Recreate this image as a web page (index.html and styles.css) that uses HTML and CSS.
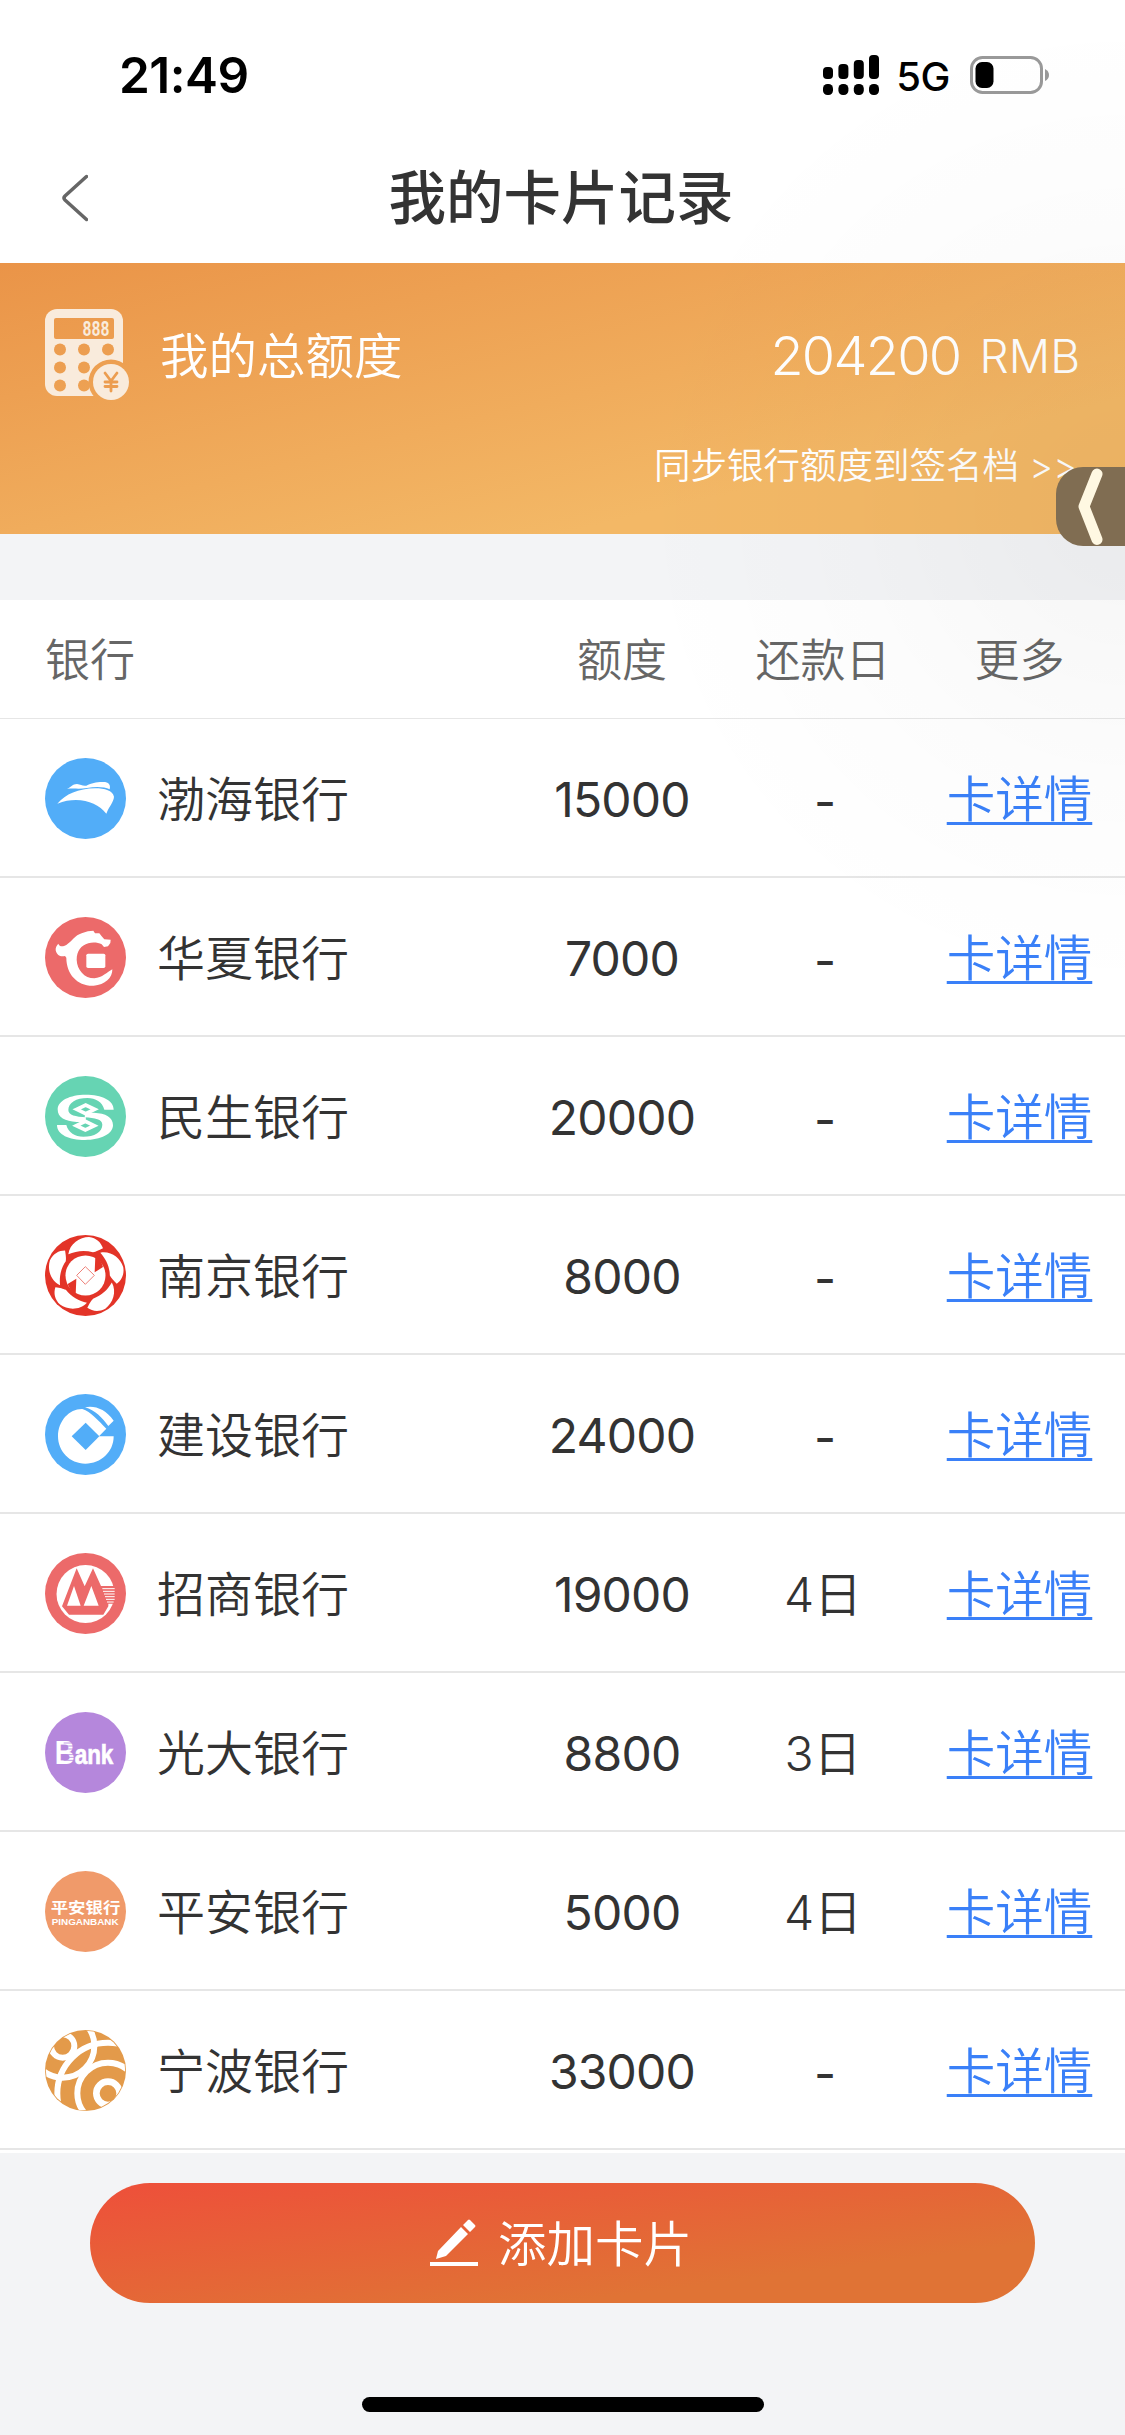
FILE: index.html
```html
<!DOCTYPE html>
<html lang="zh-CN">
<head>
  <meta charset="UTF-8" />
  <title>我的卡片记录</title>
  <link rel="stylesheet" href="styles.css">
</head>

<body>
  <!-- 状态栏 -->
  <div class="status-bar">
    <div class="time">21:49</div>
    <div class="status-icons">
      <svg class="signal" width="56" height="40" viewBox="0 0 56 40">
        <rect x="0" y="12" width="10" height="12" rx="4"/>
        <rect x="15.4" y="9" width="10" height="15" rx="4"/>
        <rect x="30.8" y="5" width="10" height="19" rx="4"/>
        <rect x="46" y="0" width="10" height="24" rx="4"/>
        <rect x="0" y="29" width="10" height="11" rx="4.5"/>
        <rect x="15.4" y="29" width="10" height="11" rx="4.5"/>
        <rect x="30.8" y="29" width="10" height="11" rx="4.5"/>
        <rect x="46" y="29" width="10" height="11" rx="4.5"/>
      </svg>
      <span class="network">5G</span>
      <svg class="battery" width="80" height="38" viewBox="0 0 80 38">
        <rect x="1.5" y="1.5" width="70" height="35" rx="11" fill="none" stroke="#999" stroke-width="3"/>
        <rect x="5.5" y="6" width="18" height="26" rx="6.5"/>
        <path d="M75 13 Q79 15 79 19 Q79 23 75 25 Z" fill="#999"/>
      </svg>
    </div>
  </div>

  <!-- 标题栏 -->
  <div class="nav-bar">
    <svg class="back" width="28" height="48" viewBox="0 0 28 48">
      <path d="M26.500 2.500 L5 22 Q3 24 5 26 L26.500 45.500" fill="none" stroke="#666" stroke-width="3.500" stroke-linecap="round"/>
    </svg>
    <h1>我的卡片记录</h1>
  </div>

  <!-- 总额度 -->
  <div class="total-card">
    <div class="total-row">
      <svg class="calc" width="84" height="92" viewBox="0 0 84 92">
        <mask id="calc-mask">
          <rect width="84" height="92" fill="#fff"/>
          <rect x="9" y="9" width="60" height="21" rx="2"/>
          <circle cx="15" cy="40.500" r="6"/><circle cx="39" cy="40.500" r="6"/><circle cx="63" cy="40.500" r="6"/>
          <circle cx="15" cy="58.500" r="6"/><circle cx="39" cy="58.500" r="6"/>
          <circle cx="15" cy="76.500" r="6"/><circle cx="39" cy="76.500" r="6"/>
          <circle cx="66" cy="73" r="22.500"/>
        </mask>
        <rect width="78" height="87" rx="12" fill="#f9ebdc" mask="url(#calc-mask)"/>
        <text class="calc-num" x="37.500" y="27" textLength="27" lengthAdjust="spacingAndGlyphs">888</text>
        <circle cx="66" cy="73" r="18" fill="#f9ebdc"/>
        <path d="M60 64 L66 72 L72 64 M66 72 V82 M60 73 H72 M60 77.500 H72" fill="none" stroke="#ec9d50" stroke-width="2.800" stroke-linecap="round"/>
      </svg>
      <span class="total-label">我的总额度</span>
      <span class="total-num">204200</span>
      <span class="total-unit">RMB</span>
    </div>
    <div class="sync">同步银行额度到签名档 &gt;&gt;</div>

    <!-- 侧边浮动按钮 -->
    <div class="float-tab">
      <svg width="69" height="79" viewBox="0 0 69 79">
        <path d="M41 7 L28 39.500 L41 72.500" fill="none" stroke="#fff8e2" stroke-width="11" stroke-linecap="round" stroke-linejoin="round"/>
      </svg>
    </div>
  </div>

  <!-- 卡片列表 -->
  <div class="card-list">
    <div class="row head">
      <span class="bank">银行</span>
      <span>额度</span>
      <span>还款日</span>
      <span>更多</span>
    </div>

    <div class="row">
      <div class="bank">
        <svg class="logo" viewBox="0 0 243 243">
          <circle cx="121.500" cy="121.500" r="121.500" fill="#52adf8"/>
          <path d="M37 137 C62 108 100 92 150 91 C180 91 203 98 207 116 C206 132 193 144 184 167 C156 132 100 113 37 137 Z" fill="#fff"/>
          <path d="M66 93 C80 86 82 79 96 78 C108 79 112 85 124 83 C140 76 152 72 172 72 C190 71 198 79 194 94 C178 86 152 85 126 90 C104 94 84 90 66 93 Z" fill="#fff"/>
        </svg>
        渤海银行
      </div>
      <span class="limit">15000</span>
      <span class="none">-</span>
      <a href="#">卡详情</a>
    </div>

    <div class="row">
      <div class="bank">
        <svg class="logo" viewBox="0 0 243 243">
          <circle cx="121.500" cy="121.500" r="121.500" fill="#ec6a6a"/>
          <path d="M32 100 C31 90 36 85 40 80 C44 90 53 90 64 84 C82 72 90 55 110 49 C122 43 136 41 145 41 L150 49 L163 49 L170 58 L178 67 L197 68 L196 78 L189 88 L177 90 L170 82 C160 77 144 75 130 79 C108 85 95 103 95 128 C96 158 118 184 148 184 C172 182 186 166 202 157 C203 182 180 204 146 206 C98 208 64 172 64 122 L60 117 C48 120 36 117 32 100 Z" fill="#fff"/>
          <rect x="124" y="110" width="57" height="43" rx="5" fill="#fff"/>
        </svg>
        华夏银行
      </div>
      <span class="limit">7000</span>
      <span class="none">-</span>
      <a href="#">卡详情</a>
    </div>

    <div class="row">
      <div class="bank">
        <svg class="logo" viewBox="0 0 243 243">
          <circle cx="121.500" cy="121.500" r="121.500" fill="#66d4b3"/>
          <g fill="#fff">
            <path d="M206 101 H178 C172 78 152 66 127 66 C94 66 70 80 70 102 C70 118 92 122 123 124 L121 138 H95 C60 136 38 125 38 100 C38 74 75 56 122 56 C170 56 206 72 206 101 Z"/>
            <path d="M206 101 H178 C172 78 152 66 127 66 C94 66 70 80 70 102 C70 118 92 122 123 124 L121 138 H95 C60 136 38 125 38 100 C38 74 75 56 122 56 C170 56 206 72 206 101 Z" transform="rotate(180 121 124)"/>
          </g>
          <g fill="#66d4b3" stroke="#fff" stroke-width="11">
            <path d="M95 100 L122 87 L149 100 L122 113 Z"/>
            <path d="M94 149 L121 136 L148 149 L121 162 Z"/>
          </g>
        </svg>
        民生银行
      </div>
      <span class="limit">20000</span>
      <span class="none">-</span>
      <a href="#">卡详情</a>
    </div>

    <div class="row">
      <div class="bank">
        <svg class="logo" viewBox="0 0 243 243">
          <circle cx="121.500" cy="121.500" r="121.500" fill="#e33428"/>
          <g fill="#fff">
            <path d="M70 58 C74 26 104 6 132 6 C154 9 168 22 174 40 C160 47 154 50 144 52 C118 44 92 48 70 58 Z"/>
            <path d="M70 58 C74 26 104 6 132 6 C154 9 168 22 174 40 C160 47 154 50 144 52 C118 44 92 48 70 58 Z" transform="rotate(72 121.500 121.500)"/>
            <path d="M70 58 C74 26 104 6 132 6 C154 9 168 22 174 40 C160 47 154 50 144 52 C118 44 92 48 70 58 Z" transform="rotate(144 121.500 121.500)"/>
            <path d="M70 58 C74 26 104 6 132 6 C154 9 168 22 174 40 C160 47 154 50 144 52 C118 44 92 48 70 58 Z" transform="rotate(216 121.500 121.500)"/>
            <path d="M70 58 C74 26 104 6 132 6 C154 9 168 22 174 40 C160 47 154 50 144 52 C118 44 92 48 70 58 Z" transform="rotate(288 121.500 121.500)"/>
            <circle cx="121.500" cy="121.500" r="60"/>
          </g>
          <path d="M151 64 L149 112 L174 96 C170 82 164 71 151 64 Z M92 179 L94 131 L68 147 C73 161 81 172 92 179 Z" fill="#e33428"/>
          <path d="M95 121 L121 95 L148 121 L121 148 Z" fill="#fff" stroke="#ee8078" stroke-width="3"/>
        </svg>
        南京银行
      </div>
      <span class="limit">8000</span>
      <span class="none">-</span>
      <a href="#">卡详情</a>
    </div>

    <div class="row">
      <div class="bank">
        <svg class="logo" viewBox="0 0 243 243">
          <circle cx="121.500" cy="121.500" r="121.500" fill="#52adf8"/>
          <path d="M162 127 H206 C206 174 168 209 121 209 C74 209 39 172 39 127 C39 80 74 44 112 45 C138 54 158 78 184 104 Z" fill="#fff"/>
          <path d="M120 40 C150 34 182 46 206 80 L190 96 C172 72 150 48 120 40 Z" fill="#fff"/>
          <path d="M80 127 L122 86 L163 127 L122 168 Z" fill="#52adf8"/>
        </svg>
        建设银行
      </div>
      <span class="limit">24000</span>
      <span class="none">-</span>
      <a href="#">卡详情</a>
    </div>

    <div class="row">
      <div class="bank">
        <svg class="logo" viewBox="0 0 243 243">
          <circle cx="121.500" cy="121.500" r="121.500" fill="#ec6a6a"/>
          <circle cx="121.500" cy="123" r="87" fill="#fff"/>
          <path d="M95 46 L119 100 L144 46 L168 99 H210 V152 H190 V160 L175 185 H72 L51 160 Z" fill="#ec6a6a"/>
          <path d="M87 99 L66 158 H107 Z M139 99 L116 158 H161 Z" fill="#fff"/>
          <path d="M172 107 H209 M174 115 H209 M177 123 H209 M180 131 H209 M183 139 H209 M186 147 H206" stroke="#fff" stroke-width="3"/>
        </svg>
        招商银行
      </div>
      <span class="limit">19000</span>
      <span class="day">4日</span>
      <a href="#">卡详情</a>
    </div>

    <div class="row">
      <div class="bank">
        <svg class="logo" viewBox="0 0 243 243">
          <circle cx="121.500" cy="121.500" r="121.500" fill="#b587dc"/>
          <text class="bank-b" x="29" y="156" textLength="60" lengthAdjust="spacingAndGlyphs">B</text>
          <text class="bank-ank" x="89" y="156" textLength="116" lengthAdjust="spacingAndGlyphs">ank</text>
          <path d="M56 93 H88 M56 102 H88 M56 111 H88 M56 128 H88 M56 136 H88 M56 145 H88" stroke="#b587dc" stroke-width="2.500"/>
        </svg>
        光大银行
      </div>
      <span class="limit">8800</span>
      <span class="day">3日</span>
      <a href="#">卡详情</a>
    </div>

    <div class="row">
      <div class="bank">
        <svg class="logo" viewBox="0 0 243 243">
          <circle cx="121.500" cy="121.500" r="121.500" fill="#f09a6a"/>
          <text class="pingan-cn" x="17" y="127" textLength="209" lengthAdjust="spacingAndGlyphs">平安银行</text>
          <text class="pingan-en" x="20" y="162" textLength="201" lengthAdjust="spacingAndGlyphs">PINGANBANK</text>
        </svg>
        平安银行
      </div>
      <span class="limit">5000</span>
      <span class="day">4日</span>
      <a href="#">卡详情</a>
    </div>

    <div class="row">
      <div class="bank">
        <svg class="logo" viewBox="0 0 243 243">
          <clipPath id="ningbo-clip"><circle cx="121.500" cy="121.500" r="119"/></clipPath>
          <circle cx="121.500" cy="121.500" r="121.500" fill="#e39a4a"/>
          <g clip-path="url(#ningbo-clip)" fill="none" stroke="#fff" stroke-width="18">
            <circle cx="53" cy="48" r="35"/>
            <circle cx="53" cy="48" r="95"/>
            <circle cx="189" cy="190" r="35" stroke-width="20"/>
            <circle cx="189" cy="190" r="92"/>
            <circle cx="189" cy="190" r="152"/>
          </g>
        </svg>
        宁波银行
      </div>
      <span class="limit">33000</span>
      <span class="none">-</span>
      <a href="#">卡详情</a>
    </div>
  </div>

  <!-- 底部按钮 -->
  <div class="footer">
    <button class="add-btn">
      <svg width="48" height="48" viewBox="0 0 48 48">
        <path d="M8 32 L31 8 L38 15 L16 37 L6 40 Z M33 6 L38 1 Q39 0 40 1 L45 6 Q46 7 45 8 L40 13 Z" fill="#fff"/>
        <rect y="43" width="48" height="4" fill="#fff"/>
      </svg>
      <span>添加卡片</span>
    </button>
    <div class="home-indicator"></div>
  </div>

  <div class="edge-shadow"></div>
</body>
</html>
```
FILE: styles.css
```css
* {
  box-sizing: border-box;
}

body {
  margin: 0;
  width: 1125px;
  height: 2435px;
  position: relative;
  overflow: hidden;
  display: flex;
  flex-direction: column;
  background-color: #f3f4f6;
  color: #333;
  font-family: Inter, "Noto Sans CJK SC", sans-serif;
  font-size: 48px;
  font-weight: 350;
}

/* Status bar */
.status-bar {
  height: 132px;
  padding: 18px 77px 0 119px;
  background-color: #fff;
  color: #000;
  display: flex;
  align-items: center;
  justify-content: space-between;
}

.time {
  font-size: 49.5px;
  font-weight: 600;
  letter-spacing: -0.5px;
}

.status-icons {
  display: flex;
  align-items: center;
}

.network {
  font-size: 40px;
  font-weight: 450;
  margin: 2px 20px 0 17px;
  letter-spacing: -0.5px;
}

.battery {
  margin-right: -2px;
}

/* Title */
.nav-bar {
  height: 131px;
  padding: 0 60px;
  background-color: #fff;
  display: grid;
  grid-template-columns: 28px 1fr 28px;
  align-items: center;
}

.nav-bar h1 {
  margin: 0;
  padding: 0 3px 7px 0;
  font-size: 57.5px;
  font-weight: 500;
  text-align: center;
}

/* Total limit */
.total-card {
  position: relative;
  height: 271px;
  padding: 46px 45px 0;
  background: linear-gradient(to bottom right, #ea9448, #f3b866 75%);
  color: #fff;
}

.total-row {
  height: 92px;
  display: flex;
  align-items: center;
}

.calc-num {
  font: bold 22px "Liberation Mono", monospace;
  fill: #f9ebdc;
}

.total-label {
  margin-left: 31px;
  margin-right: auto;
  padding-bottom: 4px;
  font-size: 48.5px;
}

.total-num {
  font-size: 54px;
  letter-spacing: -1.7px;
}

.total-unit {
  font-size: 46px;
  margin-left: 19px;
  padding-top: 2px;
}

.sync {
  margin: 36px 3px 0 0;
  font-size: 36.5px;
  text-align: right;
}

.float-tab {
  position: absolute;
  right: 0;
  top: 204px;
  width: 69px;
  height: 79px;
  background-color: #806d52;
  border-radius: 27px 0 0 27px;
  z-index: 2;
}

/* Bank table */
.card-list {
  margin-top: 66px;
  padding-bottom: 3px;
  background-color: #fff;
}

.row {
  height: 159px;
  padding: 0 9px 0 45px;
  display: grid;
  grid-template-columns: 1fr 202px 200px 193px;
  align-items: center;
  text-align: center;
  border-bottom: 2px solid #e6e6e6;
}

.row.head {
  height: 119px;
  padding-bottom: 4px;
  font-size: 45px;
  color: #666;
  border-bottom: 1px solid #e6e6e6;
}

.bank {
  display: flex;
  align-items: center;
  gap: 31px;
}

.row:not(.head) .bank,
.row a,
.day {
  padding-bottom: 3px;
}

.logo {
  width: 81px;
  height: 81px;
  margin-top: 5px;
}

.limit {
  padding-top: 4px;
  font-weight: 400;
  letter-spacing: -0.8px;
}

.none {
  padding: 8px 0 0 4px;
  font-weight: 400;
}

.row a {
  color: #3a80f8;
  font-size: 48.5px;
  text-underline-offset: 5px;
  text-decoration-thickness: 3px;
  text-decoration-skip-ink: none;
}

.bank-b {
  font: bold 98px "Liberation Sans", sans-serif;
  fill: #fff;
}

.bank-ank {
  font: bold 82px "Liberation Sans", sans-serif;
  fill: #fff;
  stroke: #fff;
  stroke-width: 2;
}

.pingan-cn {
  font: bold 46px "Noto Sans CJK SC", sans-serif;
  fill: #fff;
}

.pingan-en {
  font: bold 25px "Liberation Sans", sans-serif;
  fill: #fff;
}

/* Footer */
.footer {
  flex: 1;
  padding: 30px 90px 23px;
  display: flex;
  flex-direction: column;
  align-items: center;
  justify-content: space-between;
}

.add-btn {
  width: 100%;
  height: 120px;
  padding: 0 3px 0 0;
  border: none;
  border-radius: 60px;
  background: linear-gradient(to bottom right, #ee4f3a, #e07335 75%);
  color: #fff;
  font-family: inherit;
  font-size: 48.5px;
  font-weight: inherit;
  display: flex;
  align-items: center;
  justify-content: center;
  gap: 20px;
}

.add-btn span {
  padding-bottom: 5px;
}

.home-indicator {
  width: 402px;
  height: 15px;
  border-radius: 8px;
  background-color: #000;
}

/* Soft shadow around the floating tab */
.edge-shadow {
  position: absolute;
  top: 0;
  right: 0;
  width: 600px;
  height: 1100px;
  background: radial-gradient(circle at 100% 505px, rgba(0, 0, 0, 0.04), rgba(0, 0, 0, 0.012) 280px, transparent 500px);
  pointer-events: none;
}
```
